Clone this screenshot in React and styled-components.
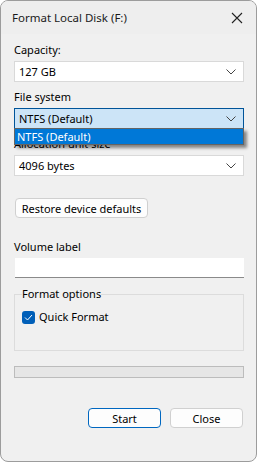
import React from 'react'
import styled, { createGlobalStyle } from 'styled-components'

const GlobalStyle = createGlobalStyle`
	* { box-sizing: border-box; }
	body {
		margin: 0;
		background: #ffffff;
		font-family: "Noto Sans", "Open Sans", sans-serif;
		font-size: 11px;
		color: #000;
	}
`

const Chevron = () => (
	<svg width="10" height="6" viewBox="0 0 10 6" fill="none">
		<path d="M0.5 0.5 L5 5 L9.5 0.5" stroke="#444" strokeWidth="1" />
	</svg>
)

const FormatDialog = () => {
	return (
		<React.Fragment>
			<GlobalStyle />
			<Window>
				<TitleBar>
					<Title>Format Local Disk (F:)</Title>
					<CloseIcon viewBox="0 0 12 12">
						<path d="M1 1 L11 11 M11 1 L1 11" stroke="#222" strokeWidth="1.1" />
					</CloseIcon>
				</TitleBar>
				<Body>
					<Label>Capacity:</Label>
					<Combo>
						<span>127 GB</span>
						<Chevron />
					</Combo>
					<Label>File system</Label>
					<ComboWrap>
						<Combo $focused>
							<span>NTFS (Default)</span>
							<Chevron />
						</Combo>
						<DropList>
							<DropItem>NTFS (Default)</DropItem>
						</DropList>
					</ComboWrap>
					<Label>Allocation unit size</Label>
					<Combo>
						<span>4096 bytes</span>
						<Chevron />
					</Combo>
					<RestoreButton>Restore device defaults</RestoreButton>
					<Label>Volume label</Label>
					<TextBox />
					<Group>
						<Legend>Format options</Legend>
						<CheckRow>
							<CheckBox>
								<svg width="9" height="7" viewBox="0 0 9 7" fill="none">
									<path d="M1 3.5 L3.5 6 L8 1" stroke="#fff" strokeWidth="1" />
								</svg>
							</CheckBox>
							<span>Quick Format</span>
						</CheckRow>
					</Group>
					<Progress />
					<Footer>
						<DialogButton $primary>Start</DialogButton>
						<DialogButton>Close</DialogButton>
					</Footer>
				</Body>
			</Window>
		</React.Fragment>
	)
}

const Window = styled.div`
	width: 257px;
	height: 462px;
	border: 1px solid #9c9c9c;
	border-radius: 8px;
	background: #f0f0f0;
	display: flex;
	flex-direction: column;
	overflow: hidden;
`
const TitleBar = styled.div`
	height: 33px;
	display: flex;
	align-items: center;
	justify-content: space-between;
	padding: 0 13px 0 11px;
	background: #eeeeee;
`
const Title = styled.div`
	font-size: 11.5px;
	color: #1a1a1a;
`
const CloseIcon = styled.svg`
	width: 12px;
	height: 12px;
`
const Body = styled.div`
	display: flex;
	flex-direction: column;
	align-items: stretch;
	padding: 8px 12px 0 13px;
`
const Label = styled.div`
	line-height: 16px;
	height: 16px;
	margin-bottom: 3px;
	white-space: nowrap;
`
const ComboWrap = styled.div`
	position: relative;
`
const Combo = styled.div`
	height: 21px;
	display: flex;
	align-items: center;
	justify-content: space-between;
	padding: 0 7px 0 4px;
	background: ${(p) => (p.$focused ? '#cce4f7' : '#ffffff')};
	border: 1px solid ${(p) => (p.$focused ? '#005499' : '#d9d9d9')};
	margin-bottom: 7px;
`
const DropList = styled.div`
	position: absolute;
	left: 0;
	top: 20px;
	width: 230px;
	height: 17px;
	border: 1px solid #646464;
	background: #0078d7;
	box-shadow: 3px 3px 3px rgba(0, 0, 0, 0.45);
	z-index: 2;
`
const DropItem = styled.div`
	color: #fff;
	line-height: 15px;
	padding-left: 2px;
`
const RestoreButton = styled.button`
	align-self: flex-start;
	margin: 15px 0 21px 1px;
	width: 133px;
	height: 20px;
	padding: 0;
	font: inherit;
	color: #000;
	background: #fdfdfd;
	border: 1px solid #d0d0d0;
	border-radius: 4px;
`
const TextBox = styled.div`
	height: 20px;
	margin-left: 1px;
	background: #fff;
	border-bottom: 1px solid #8a8a8a;
	margin-bottom: 8px;
`
const Group = styled.fieldset`
	margin: 0;
	padding: 0 0 0 7px;
	height: 65px;
	border: 1px solid #dcdcdc;
	border-radius: 0;
`
const Legend = styled.legend`
	padding: 0;
	margin-left: 0;
	line-height: 16px;
`
const CheckRow = styled.div`
	display: flex;
	align-items: center;
	gap: 4px;
	margin-top: 7px;
	line-height: 16px;
`
const CheckBox = styled.div`
	width: 13px;
	height: 13px;
	border-radius: 3px;
	background: #005fb8;
	display: flex;
	align-items: center;
	justify-content: center;
`
const Progress = styled.div`
	height: 12px;
	margin-top: 15px;
	background: #e6e6e6;
	border: 1px solid #bcbcbc;
`
const Footer = styled.div`
	display: flex;
	justify-content: flex-end;
	gap: 9px;
	margin-top: 30px;
	padding-right: 1px;
`
const DialogButton = styled.button`
	width: 73px;
	height: 20px;
	padding: 0;
	font: inherit;
	color: #000;
	background: #fdfdfd;
	border: 1px solid ${(p) => (p.$primary ? '#0067c0' : '#d0d0d0')};
	border-radius: 4px;
`

export default FormatDialog
